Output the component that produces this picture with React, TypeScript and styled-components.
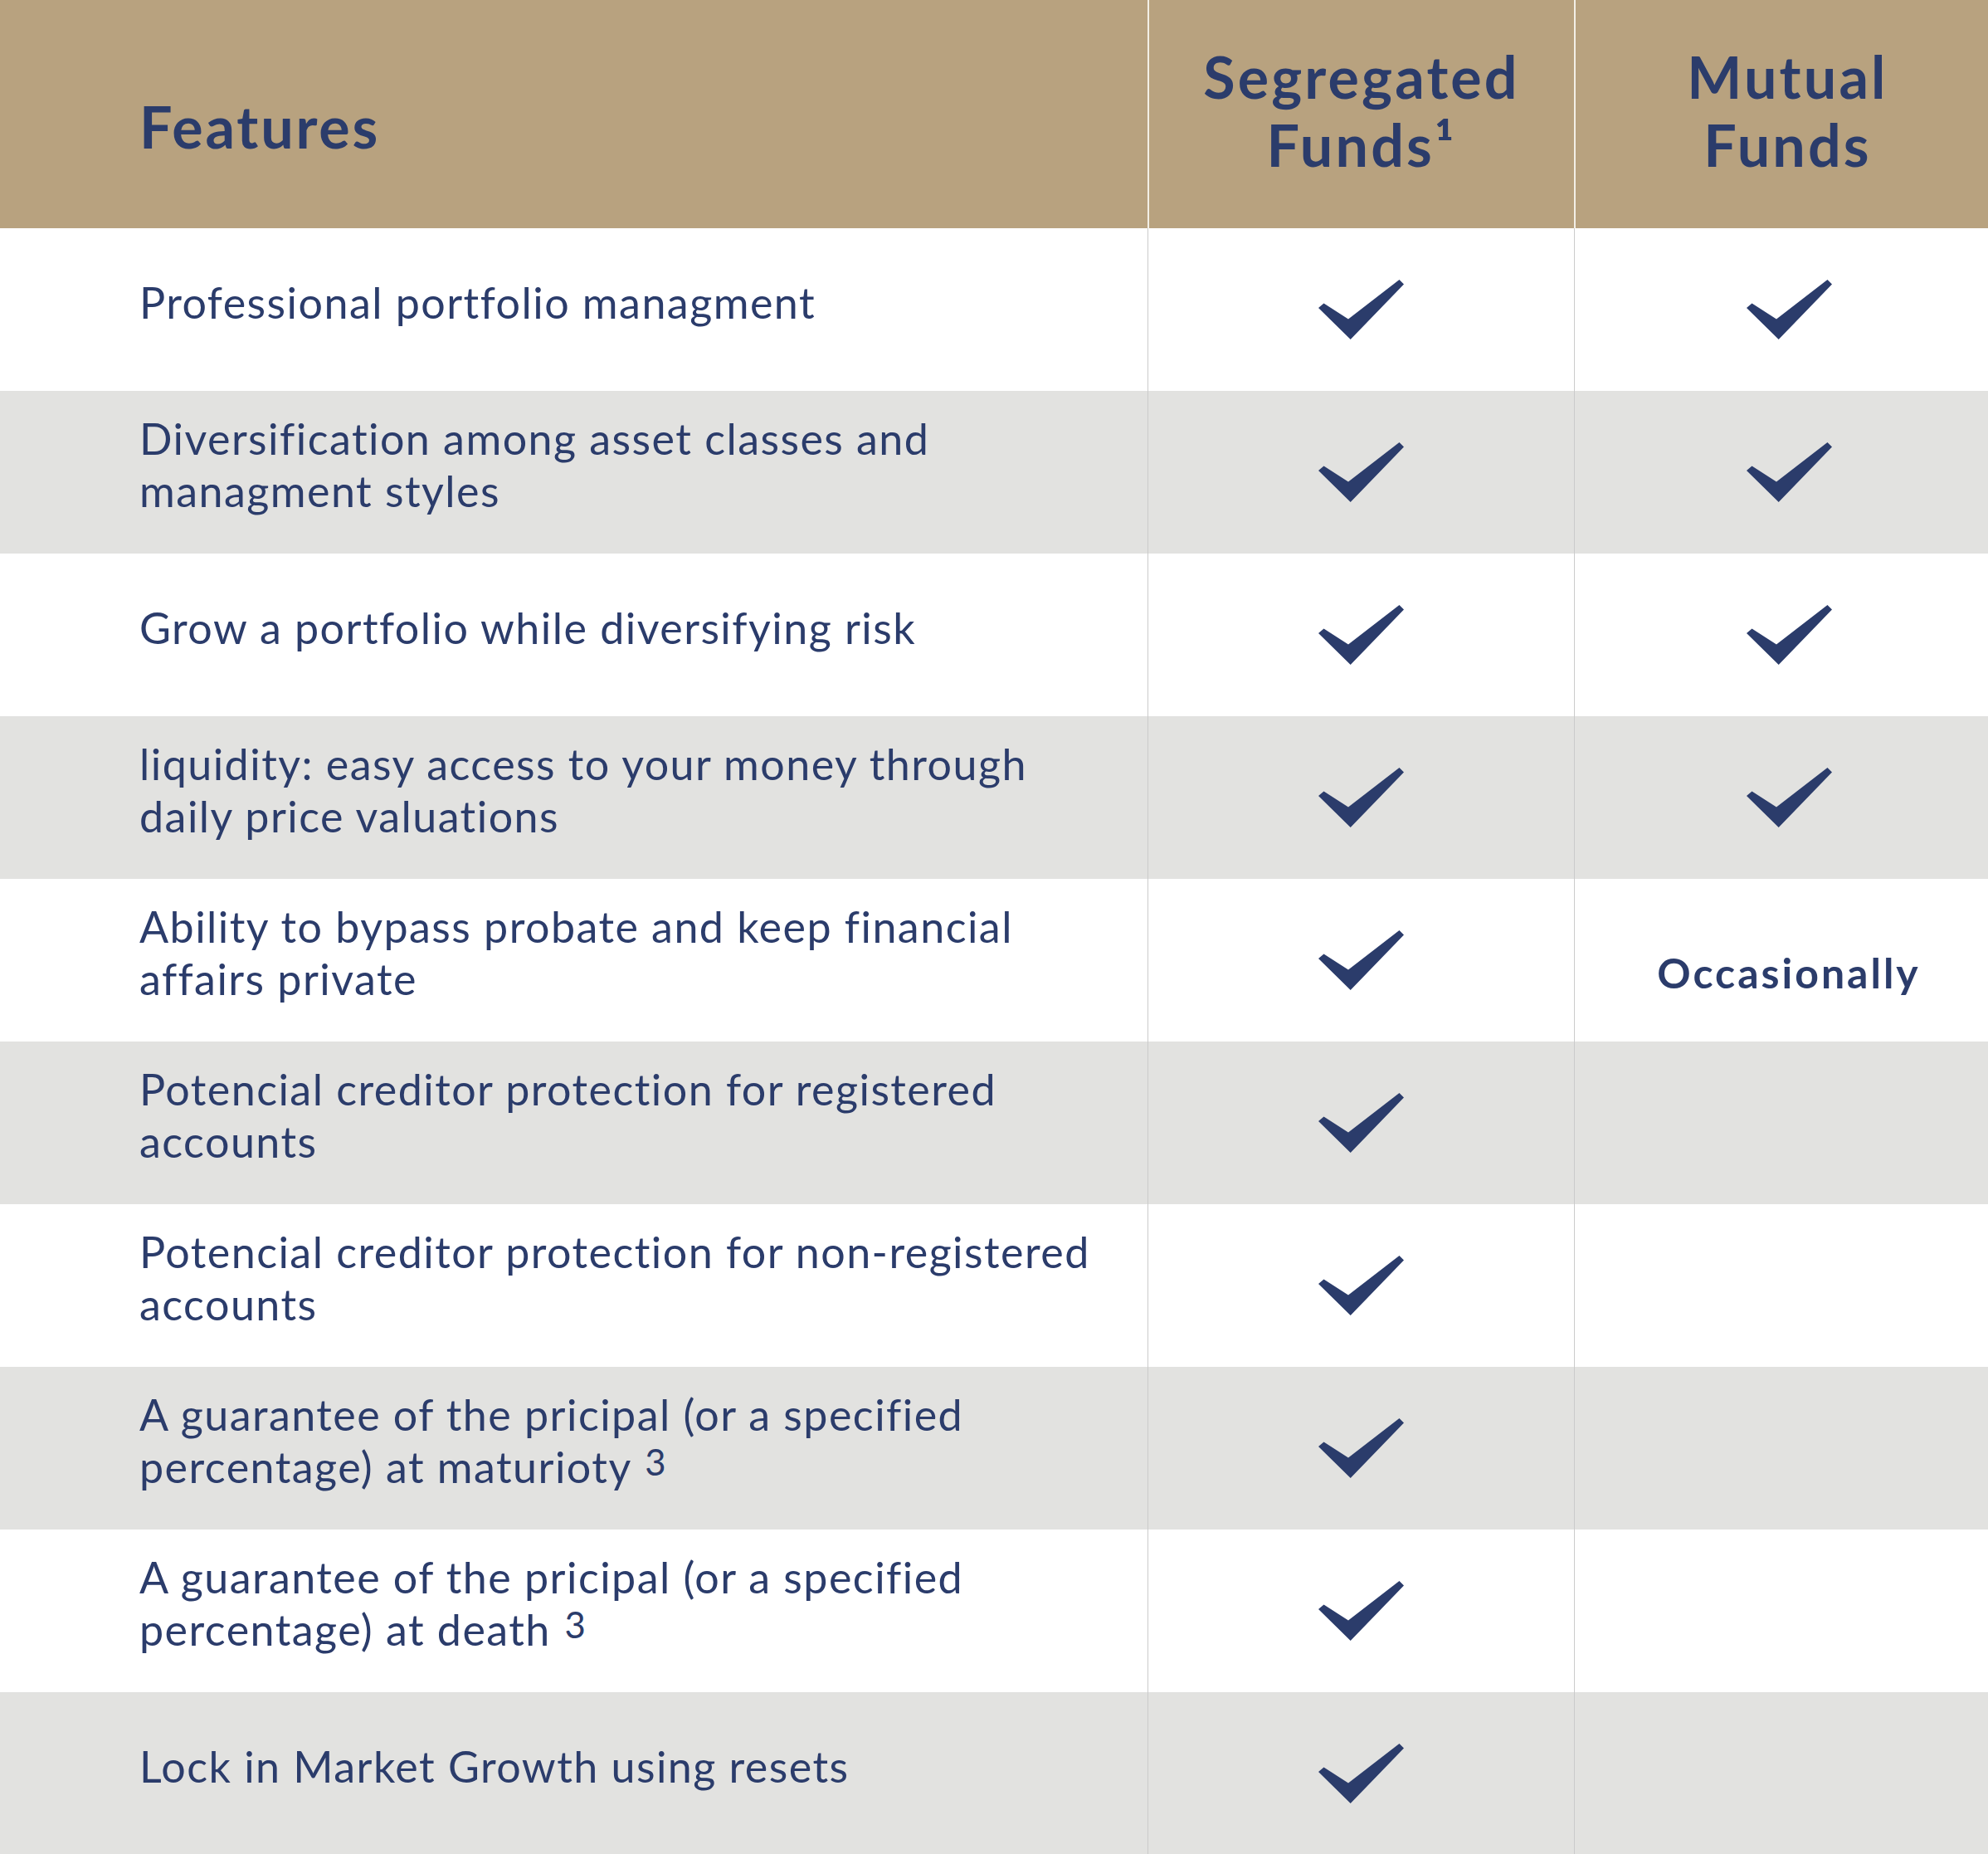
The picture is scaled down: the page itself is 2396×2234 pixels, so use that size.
import React from "react";
import styled, { createGlobalStyle } from "styled-components";

const GlobalStyle = createGlobalStyle`
    html, body {
        margin: 0;
        padding: 0;
        background: #ffffff;
    }
    body {
        font-family: Lato, "Liberation Sans", Arial, sans-serif;
        color: #2b3c6b;
    }
`

const Table = styled.div`
    display: grid;
    grid-template-columns: 1383px 514px 1fr;
    width: 100%;
`

const HeadCell = styled.div<{ $first?: boolean; $shift?: number }>`
    height: 275px;
    box-sizing: border-box;
    background: #b8a27f;
    display: flex;
    align-items: center;
    justify-content: ${p => p.$first ? 'flex-start' : 'center'};
    padding: ${p => p.$first ? '28px 0 0 168px' : `0 0 10px ${p.$shift || 0}px`};
    border-left: ${p => p.$first ? 'none' : '2px solid #f3efe6'};
    font-weight: 700;
    font-size: 70px;
    line-height: 82px;
    letter-spacing: ${p => p.$first ? '0.04em' : '0.045em'};
    text-align: center;
    color: #2b3c6b;
`

const Cell = styled.div<{ $striped: boolean; $first?: boolean; $shift?: number }>`
    height: 196px;
    box-sizing: border-box;
    background: ${p => p.$striped ? '#e2e2e0' : '#ffffff'};
    display: flex;
    align-items: center;
    justify-content: ${p => p.$first ? 'flex-start' : 'center'};
    padding: ${p => p.$first ? '0 20px 18px 168px' : `0 0 0 ${p.$shift || 0}px`};
    border-left: ${p => p.$first ? 'none' : '1px solid #cbcbcb'};
`

const FeatureText = styled.div`
    font-size: 52px;
    line-height: 63px;
    letter-spacing: 0.028em;
    white-space: nowrap;
    sup {
        font-size: 0.84em;
        line-height: 0;
        vertical-align: 0.2em;
        margin-left: 2px;
    }
`

const Word = styled.span`
    font-size: 50px;
    font-weight: 700;
    letter-spacing: 0.06em;
    padding-top: 30px;
`

const Check = () => (
    <svg width="103" height="72" viewBox="0 0 103 72">
        <path d="M0 34 L6.5 28.5 L36 47.5 L97.5 0 L103 5.5 L38.7 72 Z" fill="#2b3c6b" />
    </svg>
)

type Mark = 'check' | 'occasionally' | null

const rows: { text: React.ReactNode; seg: Mark; mutual: Mark }[] = [
    { text: 'Professional portfolio managment', seg: 'check', mutual: 'check' },
    { text: <>Diversification among asset classes and<br />managment styles</>, seg: 'check', mutual: 'check' },
    { text: 'Grow a portfolio while diversifying risk', seg: 'check', mutual: 'check' },
    { text: <>liquidity: easy access to your money through<br />daily price valuations</>, seg: 'check', mutual: 'check' },
    { text: <>Ability to bypass probate and keep financial<br />affairs private</>, seg: 'check', mutual: 'occasionally' },
    { text: <>Potencial creditor protection for registered<br />accounts</>, seg: 'check', mutual: null },
    { text: <>Potencial creditor protection for non-registered<br />accounts</>, seg: 'check', mutual: null },
    { text: <>A guarantee of the pricipal (or a specified<br />percentage) at maturioty <sup>3</sup></>, seg: 'check', mutual: null },
    { text: <>A guarantee of the pricipal (or a specified<br />percentage) at death <sup>3</sup></>, seg: 'check', mutual: null },
    { text: 'Lock in Market Growth using resets', seg: 'check', mutual: null },
]

const renderMark = (m: Mark) => {
    if (m === 'check') return <Check />
    if (m === 'occasionally') return <Word>Occasionally</Word>
    return null
}

const App: React.FC = () => {
    return <>
        <GlobalStyle />
        <Table>
            <HeadCell $first>Features</HeadCell>
            <HeadCell>Segregated<br />Funds¹</HeadCell>
            <HeadCell $shift={14}>Mutual<br />Funds</HeadCell>
            {rows.map((r, i) => (
                <React.Fragment key={i}>
                    <Cell $first $striped={i % 2 === 1}>
                        <FeatureText>{r.text}</FeatureText>
                    </Cell>
                    <Cell $striped={i % 2 === 1}>{renderMark(r.seg)}</Cell>
                    <Cell $striped={i % 2 === 1} $shift={18}>{renderMark(r.mutual)}</Cell>
                </React.Fragment>
            ))}
        </Table>
    </>
}

export default App;
